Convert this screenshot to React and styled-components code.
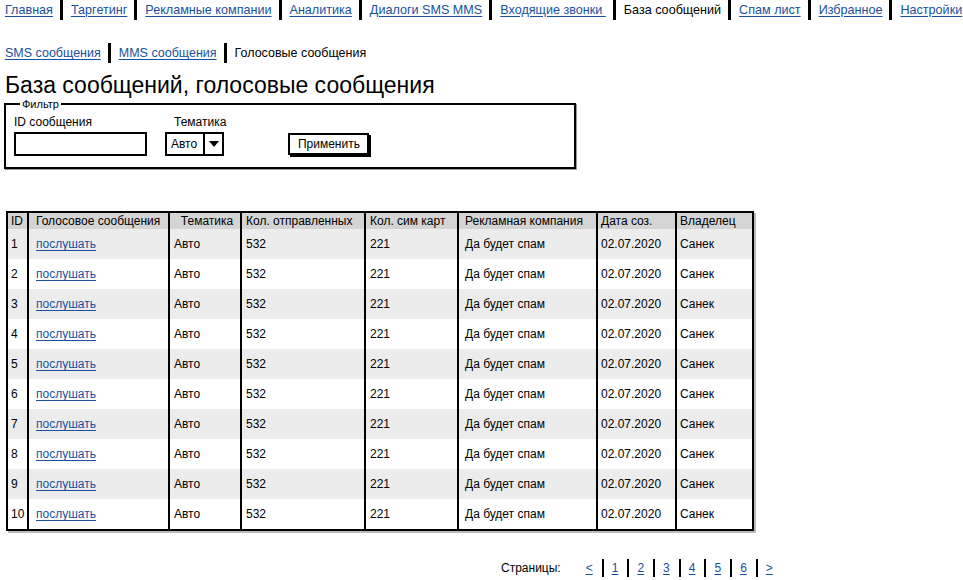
import React from 'react'
import styled, { createGlobalStyle } from 'styled-components'

const GlobalStyle = createGlobalStyle`
  body {
    margin: 0;
    background: #fff;
    color: #000;
    font-family: "Liberation Sans", Arial, sans-serif;
  }
`

const mainNav = ['Главная', 'Таргетинг', 'Рекламные компании', 'Аналитика', 'Диалоги SMS MMS',
  'Входящие звонки ', 'База сообщений', 'Спам лист', 'Избранное', 'Настройки']
const subNav = ['SMS сообщения', 'MMS сообщения', 'Голосовые сообщения']

const columns = [
  { title: 'ID', width: 21, pad: 3 },
  { title: 'Голосовое сообщения', width: 141, pad: 7 },
  { title: 'Тематика', width: 72, pad: 4, center: true },
  { title: 'Кол. отправленных', width: 124, pad: 4 },
  { title: 'Кол. сим карт', width: 93, pad: 4 },
  { title: 'Рекламная компания', width: 139, pad: 6 },
  { title: 'Дата соз.', width: 79, pad: 3 },
  { title: 'Владелец', width: 77, pad: 3 },
]

const rows = Array.from({ length: 10 }, (_, i) => [
  String(i + 1), 'послушать', 'Авто', '532', '221', 'Да будет спам', '02.07.2020', 'Санек',
])

const Page = styled.div`
  width: 963px;
  height: 580px;
  overflow: hidden;
  padding-left: 5px;
  box-sizing: border-box;
`

const Nav = styled.nav`
  display: flex;
  align-items: center;
  height: 20px;
  margin-top: ${p => p.$top}px;
  font-size: ${p => p.$size}px;
  white-space: nowrap;
`

const NavItem = styled.span`
  display: flex;
  align-items: center;
  flex-shrink: 0;
  height: 20px;
  padding-right: 7px;
  & + & {
    border-left: 3px solid #000;
    padding-left: 8px;
  }
`

const Link = styled.a`
  color: #184f9e;
  text-decoration: underline;
  text-underline-offset: 2px;
  white-space: pre;
  cursor: pointer;
`

const Title = styled.h1`
  margin: 9px 0 0;
  font-size: 23px;
  font-weight: normal;
  line-height: 26px;
`

const Filter = styled.fieldset`
  width: 572px;
  height: 71px;
  margin: 0 0 0 -1px;
  padding: 0 0 0 8px;
  box-sizing: border-box;
  border: 2px solid #000;
  box-shadow: 1px 1px 0 #999;
  display: flex;
  align-items: flex-start;
`

const Legend = styled.legend`
  font-size: 11px;
  padding: 0 2px;
  margin-left: 6px;
  line-height: 12px;
`

const Field = styled.div`
  display: flex;
  flex-direction: column;
  margin-right: ${p => p.$gap}px;
`

const Label = styled.label`
  font-size: 12px;
  line-height: 14px;
  margin-top: 5px;
  padding-left: ${p => p.$indent || 0}px;
  height: 17px;
`

const Input = styled.input`
  width: 133px;
  height: 24px;
  margin: 0;
  box-sizing: border-box;
  border: 2px solid #000;
  padding: 0 4px;
  font: inherit;
`

const Select = styled.div`
  display: flex;
  width: 59px;
  height: 24px;
  box-sizing: border-box;
  border: 2px solid #000;
  font-size: 12px;
`

const SelectValue = styled.span`
  flex: 1;
  display: flex;
  align-items: center;
  padding-left: 4px;
  border-right: 2px solid #000;
`

const SelectArrow = styled.span`
  width: 17px;
  display: flex;
  align-items: center;
  justify-content: center;
`

const Button = styled.button`
  align-self: flex-start;
  margin-top: 23px;
  width: 81px;
  height: 22px;
  background: #fff;
  border: 2px solid #000;
  box-shadow: 2px 2px 0 #000;
  font: inherit;
  font-size: 12px;
  padding: 0;
`

const Table = styled.table`
  margin: 42px 0 0 1px;
  border-collapse: collapse;
  table-layout: fixed;
  width: 746px;
  border: 2px solid #000;
  box-shadow: 2px 2px 0 #bbb;
  font-size: 12px;
`

const Th = styled.th`
  height: 16px;
  padding: 0 0 0 ${p => p.$pad}px;
  background: #d4d4d4;
  font-weight: normal;
  text-align: ${p => (p.$center ? 'center' : 'left')};
  white-space: nowrap;
  overflow: hidden;
  line-height: 14px;
  & + & { border-left: 2px solid #000; }
`

const Tr = styled.tr`
  background: ${p => (p.$odd ? '#ececec' : '#fff')};
`

const Td = styled.td`
  height: 30px;
  padding: 0 0 0 ${p => p.$pad}px;
  white-space: nowrap;
  overflow: hidden;
  & + & { border-left: 2px solid #000; }
`

const Pager = styled.div`
  display: flex;
  align-items: center;
  margin: 28px 0 0 496px;
  height: 18px;
  font-size: 12px;
`

const PagerLabel = styled.span`
  margin-right: 17px;
`

const PageItem = styled.span`
  display: flex;
  align-items: center;
  height: 18px;
  padding: 0 9px 0 8px;
  &:first-of-type { padding-left: 0; }
  & + & { border-left: 2px solid #000; }
`

function Tabs({ items, active, top, size }) {
  return (
    <Nav $top={top} $size={size}>
      {items.map((label, i) => (
        <NavItem key={label}>
          {i === active ? label : <Link>{label}</Link>}
        </NavItem>
      ))}
    </Nav>
  )
}

export default function App() {
  const pages = ['<', '1', '2', '3', '4', '5', '6', '>']
  return (
    <Page>
      <GlobalStyle />
      <Tabs items={mainNav} active={6} top={0} size={12.6} />
      <Tabs items={subNav} active={2} top={23} size={12.5} />
      <Title>База сообщений, голосовые сообщения</Title>
      <Filter>
        <Legend>Фильтр</Legend>
        <Field $gap={18}>
          <Label>ID сообщения</Label>
          <Input />
        </Field>
        <Field $gap={62}>
          <Label $indent={9}>Тематика</Label>
          <Select>
            <SelectValue>Авто</SelectValue>
            <SelectArrow>
              <svg width="10" height="6" viewBox="0 0 10 6">
                <path d="M0 0 L10 0 L5 6 Z" fill="#000" />
              </svg>
            </SelectArrow>
          </Select>
        </Field>
        <Button>Применить</Button>
      </Filter>
      <Table>
        <colgroup>
          {columns.map(c => <col key={c.title} style={{ width: c.width }} />)}
        </colgroup>
        <thead>
          <tr>
            {columns.map(c => (
              <Th key={c.title} $pad={c.pad} $center={c.center}>{c.title}</Th>
            ))}
          </tr>
        </thead>
        <tbody>
          {rows.map((row, i) => (
            <Tr key={row[0]} $odd={i % 2 === 0}>
              {row.map((cell, j) => (
                <Td key={j} $pad={columns[j].pad}>
                  {j === 1 ? <Link>{cell}</Link> : cell}
                </Td>
              ))}
            </Tr>
          ))}
        </tbody>
      </Table>
      <Pager>
        <PagerLabel>Страницы:</PagerLabel>
        {pages.map(p => (
          <PageItem key={p}><Link>{p}</Link></PageItem>
        ))}
      </Pager>
    </Page>
  )
}
